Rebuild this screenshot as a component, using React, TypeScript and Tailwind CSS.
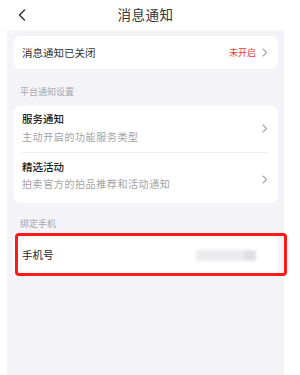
import React from "react";

const Chevron = () => (
  <svg width="6" height="9" viewBox="0 0 6 9" fill="none">
    <path d="M1 1l3.5 3.5L1 8" stroke="#a3a3a8" strokeWidth="1.1" strokeLinecap="round" strokeLinejoin="round" />
  </svg>
);

export default function App() {
  const font = { fontFamily: '"Noto Sans CJK SC", "Noto Sans", sans-serif' };
  return (
    <div className="relative w-[300px] h-[375px] bg-white overflow-hidden" style={font}>
      <div className="ml-[7px] w-[277px] h-full flex flex-col">
        <div className="relative h-[30px] flex items-center justify-center bg-white">
          <svg className="absolute left-[11px] top-[9px]" width="8" height="12" viewBox="0 0 8 12" fill="none">
            <path d="M6.5 1L1.5 6l5 5" stroke="#333" strokeWidth="1.5" strokeLinecap="round" strokeLinejoin="round" />
          </svg>
          <span className="text-[13.5px] leading-none text-[#333] tracking-[0.5px]">消息通知</span>
        </div>
        <div className="flex-1 bg-[#f3f3f8] px-[6px] pt-[6px] flex flex-col">
          <div className="h-[33px] bg-white rounded-[8px] pl-[9px] pr-[10px] flex items-center justify-between">
            <span className="text-[10.5px] leading-none text-[#333] pt-[2px]">消息通知已关闭</span>
            <div className="flex items-center gap-[6px]">
              <span className="text-[9px] leading-none text-[#e2403c]">未开启</span>
              <Chevron />
            </div>
          </div>
          <div className="pt-[17px] pb-[8px] pl-[7px] text-[9px] leading-[12px] text-[#a8a8ae]">平台通知设置</div>
          <div className="bg-white rounded-[8px] pl-[9px] pr-[10px] flex flex-col">
            <div className="h-[47px] flex items-start justify-between border-b border-[#f0f0f3]">
              <div className="flex flex-col gap-[6px] pt-[7px]">
                <span className="text-[10.5px] leading-[12px] text-[#222] font-medium">服务通知</span>
                <span className="text-[10px] leading-[12px] text-[#a3a3a8] tracking-[0.6px]">主动开启的功能服务类型</span>
              </div>
              <div className="pt-[18px]"><Chevron /></div>
            </div>
            <div className="h-[50px] flex items-start justify-between">
              <div className="flex flex-col gap-[5px] pt-[8px]">
                <span className="text-[10.5px] leading-[12px] text-[#222] font-medium">精选活动</span>
                <span className="text-[10px] leading-[12px] text-[#a3a3a8] tracking-[0.6px]">拍卖官方的拍品推荐和活动通知</span>
              </div>
              <div className="pt-[22px]"><Chevron /></div>
            </div>
          </div>
          <div className="pt-[15px] pb-[5px] pl-[7px] text-[9px] leading-[12px] text-[#a8a8ae]">绑定手机</div>
          <div className="h-[40px] bg-white rounded-[8px] pl-[9px] pr-[10px] flex items-center justify-between">
            <span className="text-[10.5px] leading-none text-[#222]">手机号</span>
            <div className="mr-[12px] flex items-center blur-[1.5px]">
              <div className="w-[48px] h-[11px] bg-[#ececee]" />
              <div className="w-[12px] h-[11px] bg-[#e0e0e2]" />
            </div>
          </div>
        </div>
      </div>
      <div className="absolute left-[15px] top-[233px] w-[272px] h-[43px] border-[3px] border-[#ff1a1a] rounded-[4px]" />
    </div>
  );
}
